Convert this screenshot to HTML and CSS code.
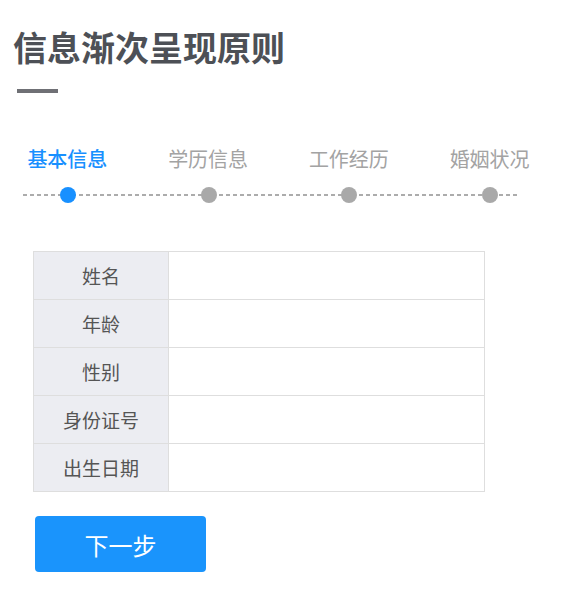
FILE: index.html
```html
<!DOCTYPE html>
<html lang="zh-CN">
<head>
    <meta charset="UTF-8">
    <meta name="viewport" content="width=device-width, initial-scale=1.0">
    <title>信息渐次呈现原则</title>
    <link rel="stylesheet" href="styles.css">
</head>
<body>

<div class="page">
    <div class="title">信息渐次呈现原则</div>
    <div class="title-bar"></div>

    <!-- 步骤条 -->
    <div class="steps">
        <div class="step-label active">基本信息</div>
        <div class="step-label">学历信息</div>
        <div class="step-label">工作经历</div>
        <div class="step-label">婚姻状况</div>
    </div>
    <div class="step-track">
        <span class="dot active"></span>
        <span class="dot"></span>
        <span class="dot"></span>
        <span class="dot"></span>
    </div>

    <!-- 基本信息表单 -->
    <table class="info-table">
        <tr><td class="label">姓名</td><td class="value"></td></tr>
        <tr><td class="label">年龄</td><td class="value"></td></tr>
        <tr><td class="label">性别</td><td class="value"></td></tr>
        <tr><td class="label">身份证号</td><td class="value"></td></tr>
        <tr><td class="label">出生日期</td><td class="value"></td></tr>
    </table>

    <button class="next-btn">下一步</button>
</div>

</body>
</html>
```

FILE: styles.css
```css
body {
    margin: 0;
    background-color: #ffffff;
    font-family: "Noto Sans CJK SC", "Noto Sans", sans-serif;
}
.page {
    width: 564px;
    padding-top: 30px;
}
.title {
    margin-left: 13px;
    font-size: 34px;
    line-height: 34px;
    font-weight: bold;
    color: #4d5056;
}
.title-bar {
    margin-left: 17px;
    margin-top: 25px;
    width: 41px;
    height: 4px;
    background-color: #6f7075;
}
.steps {
    display: grid;
    grid-template-columns: repeat(4, 1fr);
    width: 563px;
    margin-left: -3px;
    margin-top: 56px;
}
.step-label {
    text-align: center;
    font-size: 20px;
    line-height: 20px;
    color: #a3a3a3;
}
.step-label.active {
    color: #1890ff;
    font-weight: 500;
}
.step-track {
    display: flex;
    justify-content: space-between;
    margin-left: 23px;
    margin-top: 18px;
    width: 497px;
    height: 16px;
    padding: 0 22px 0 37px;
    box-sizing: border-box;
    background-image: repeating-linear-gradient(to right, #acacac 0, #acacac 4px, transparent 4px, transparent 7px);
    background-size: 100% 2px;
    background-position: left center;
    background-repeat: no-repeat;
}
.dot {
    width: 16px;
    height: 16px;
    border-radius: 50%;
    background-color: #a9a9a9;
}
.dot.active {
    background-color: #1890ff;
}
.info-table {
    margin-left: 33px;
    margin-top: 48px;
    width: 452px;
    border-collapse: collapse;
}
.info-table tr {
    height: 48px;
}
.info-table td {
    border: 1px solid #dedede;
    padding: 0;
}
.info-table .label {
    width: 134px;
    background-color: #ecedf2;
    text-align: center;
    font-size: 19px;
    color: #555555;
}
.next-btn {
    display: block;
    margin-left: 35px;
    margin-top: 24px;
    width: 171px;
    height: 56px;
    border: none;
    border-radius: 4px;
    background-color: #1a94fc;
    color: #ffffff;
    font-family: inherit;
    font-size: 24px;
    cursor: pointer;
}
```
